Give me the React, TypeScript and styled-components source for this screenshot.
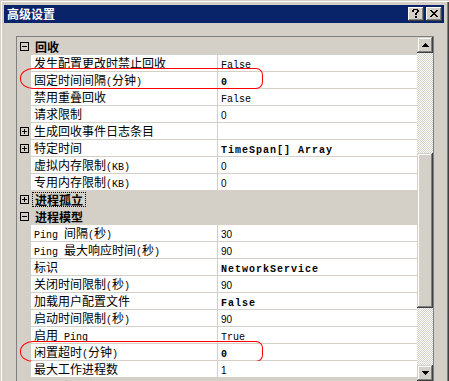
import React from 'react';
import styled, { createGlobalStyle } from 'styled-components';

const FACE = '#D4D0C8';
const CJK = `"Noto Sans CJK SC", "Noto Sans", sans-serif`;
const MONO = `"Liberation Mono", "Noto Sans CJK SC", monospace`;

const GlobalStyle = createGlobalStyle`
  html, body { margin: 0; padding: 0; width: 449px; height: 381px; overflow: hidden; background: ${FACE}; }
  #root { width: 449px; height: 381px; overflow: hidden; }
`;

const Window = styled.div`
  box-sizing: border-box;
  width: 449px;
  height: 400px;
  padding: 5px 5px 0 4px;
  display: flex;
  flex-direction: column;
  background: ${FACE};
  box-shadow: inset 1px 1px ${FACE}, inset 2px 2px #fff, inset -1px -1px #404040, inset -2px -2px #808080;
`;

const TitleBar = styled.div`
  height: 18px;
  flex: none;
  background: #0a246a;
  display: flex;
  align-items: center;
  padding: 0 2px 0 2px;
`;

const Title = styled.span`
  color: #fff;
  font: bold 12px/18px ${CJK};
  padding-left: 1px;
`;

const CaptionButtons = styled.div`
  margin-left: auto;
  display: flex;
  gap: 2px;
`;

const CaptionButton = styled.div`
  width: 16px;
  height: 14px;
  box-sizing: border-box;
  background: ${FACE};
  box-shadow: inset -1px -1px #404040, inset 1px 1px #fff, inset -2px -2px #808080;
  display: flex;
  align-items: center;
  justify-content: center;
  padding-bottom: 1px;
  padding-right: 1px;
`;

const Body = styled.div`
  flex: 1;
  padding: 13px 10px 0 12px;
`;

const PropertyGrid = styled.div`
  box-sizing: border-box;
  width: 418px;
  height: 346px;
  border: 1px solid #808080;
  display: flex;
  background: ${FACE};
`;

const List = styled.div`
  box-sizing: border-box;
  width: 400px;
  height: 344px;
  padding-top: 1px;
  overflow: hidden;
  background: ${FACE};
`;

const PropRow = styled.div`
  position: relative;
  display: flex;
  height: 17px;
`;

const CategoryRow = styled.div`
  display: flex;
  height: 17px;
  background: ${FACE};
  align-items: center;
`;

const Gutter = styled.div`
  width: 14px;
  flex: none;
  display: flex;
  align-items: center;
  padding-left: 3px;
  box-sizing: border-box;
`;

const NameCell = styled.div`
  box-sizing: border-box;
  width: 187px;
  flex: none;
  background: #fff;
  border-right: 1px solid ${FACE};
  border-bottom: 1px solid ${FACE};
  padding-left: 3px;
  font: 12px/16px ${CJK};
  color: #000;
  white-space: nowrap;
  overflow: hidden;
`;

const ValueCell = styled.div`
  box-sizing: border-box;
  flex: 1;
  background: #fff;
  border-bottom: 1px solid ${FACE};
  padding-left: 3px;
  line-height: 16px;
  white-space: nowrap;
  overflow: hidden;
`;

const Latin = styled.span`
  font-family: "Liberation Mono", monospace;
  font-size: 10px;
`;

const Value = styled.span<{ $kind: 'num' | 'text' | 'bold' }>`
  color: #000;
  font-family: ${(p) => (p.$kind === 'num' ? '"Liberation Sans", sans-serif' : '"Liberation Mono", monospace')};
  font-size: 10px;
  font-weight: ${(p) => (p.$kind === 'bold' ? 'bold' : 'normal')};
  letter-spacing: ${(p) => (p.$kind === 'bold' ? '1px' : '0')};
`;

const CategoryLabel = styled.span<{ $focused?: boolean }>`
  margin-left: 1px;
  padding: 0 2px;
  border: 1px dotted ${(p) => (p.$focused ? '#000' : 'transparent')};
  font: bold 12px/13px ${CJK};
  color: #000;
  white-space: nowrap;
`;

const RedMark = styled.div<{ $top: number }>`
  position: absolute;
  left: 3px;
  top: ${(p) => p.$top}px;
  width: 243px;
  height: 21px;
  box-sizing: border-box;
  border: 1px solid #ff0000;
  border-radius: 13px 7px 7px 13px / 10px 7px 7px 10px;
  pointer-events: none;
`;

const Scrollbar = styled.div`
  width: 16px;
  height: 344px;
  flex: none;
  display: flex;
  flex-direction: column;
`;

const Raised = styled.div<{ $h: number }>`
  box-sizing: border-box;
  width: 16px;
  height: ${(p) => p.$h}px;
  flex: none;
  background: ${FACE};
  box-shadow: inset -1px -1px #404040, inset 1px 1px ${FACE}, inset -2px -2px #808080, inset 2px 2px #fff;
  display: flex;
  align-items: center;
  justify-content: center;
`;

const Track = styled.div<{ $h?: number }>`
  flex: ${(p) => (p.$h ? 'none' : '1')};
  height: ${(p) => (p.$h ? `${p.$h}px` : 'auto')};
  background-color: ${FACE};
  background-image: repeating-conic-gradient(#fff 0 25%, ${FACE} 0 50%);
  background-size: 2px 2px;
`;

const Arrow = ({ down }: { down?: boolean }) => (
  <svg width="7" height="4" viewBox="0 0 7 4" shapeRendering="crispEdges" style={{ transform: down ? 'scaleY(-1)' : undefined }}>
    <rect x="3" y="0" width="1" height="1" fill="#000" />
    <rect x="2" y="1" width="3" height="1" fill="#000" />
    <rect x="1" y="2" width="5" height="1" fill="#000" />
    <rect x="0" y="3" width="7" height="1" fill="#000" />
  </svg>
);

const Expander = ({ open }: { open: boolean }) => (
  <svg width="9" height="9" viewBox="0 0 9 9" shapeRendering="crispEdges">
    <rect x="0.5" y="0.5" width="8" height="8" fill="none" stroke="#000" />
    <rect x="2" y="4" width="5" height="1" fill="#000" />
    {!open && <rect x="4" y="2" width="1" height="5" fill="#000" />}
  </svg>
);

const QuestionGlyph = () => (
  <svg width="8" height="9" viewBox="0 0 8 9" shapeRendering="crispEdges">
    <rect x="1" y="0" width="5" height="1" fill="#000" />
    <rect x="0" y="1" width="2" height="2" fill="#000" />
    <rect x="5" y="1" width="2" height="2" fill="#000" />
    <rect x="4" y="3" width="2" height="1" fill="#000" />
    <rect x="3" y="4" width="2" height="2" fill="#000" />
    <rect x="3" y="7" width="2" height="2" fill="#000" />
  </svg>
);

const CloseGlyph = () => (
  <svg width="8" height="7" viewBox="0 0 8 7" shapeRendering="crispEdges">
    <rect x="0" y="0" width="2" height="1" fill="#000" />
    <rect x="6" y="0" width="2" height="1" fill="#000" />
    <rect x="1" y="1" width="2" height="1" fill="#000" />
    <rect x="5" y="1" width="2" height="1" fill="#000" />
    <rect x="2" y="2" width="4" height="1" fill="#000" />
    <rect x="3" y="3" width="2" height="1" fill="#000" />
    <rect x="2" y="4" width="4" height="1" fill="#000" />
    <rect x="1" y="5" width="2" height="1" fill="#000" />
    <rect x="5" y="5" width="2" height="1" fill="#000" />
    <rect x="0" y="6" width="2" height="1" fill="#000" />
    <rect x="6" y="6" width="2" height="1" fill="#000" />
  </svg>
);

type Row =
  | { type: 'cat'; label: string; open: boolean; focused?: boolean }
  | { type: 'prop'; name: string; value: string; bold?: boolean; expander?: boolean; mark?: number };

const rows: Row[] = [
  { type: 'cat', label: '回收', open: true },
  { type: 'prop', name: '发生配置更改时禁止回收', value: 'False' },
  { type: 'prop', name: '固定时间间隔(分钟)', value: '0', bold: true, mark: -4 },
  { type: 'prop', name: '禁用重叠回收', value: 'False' },
  { type: 'prop', name: '请求限制', value: '0' },
  { type: 'prop', name: '生成回收事件日志条目', value: '', expander: true },
  { type: 'prop', name: '特定时间', value: 'TimeSpan[] Array', bold: true, expander: true },
  { type: 'prop', name: '虚拟内存限制(KB)', value: '0' },
  { type: 'prop', name: '专用内存限制(KB)', value: '0' },
  { type: 'cat', label: '进程孤立', open: false, focused: true },
  { type: 'cat', label: '进程模型', open: true },
  { type: 'prop', name: 'Ping 间隔(秒)', value: '30' },
  { type: 'prop', name: 'Ping 最大响应时间(秒)', value: '90' },
  { type: 'prop', name: '标识', value: 'NetworkService', bold: true },
  { type: 'prop', name: '关闭时间限制(秒)', value: '90' },
  { type: 'prop', name: '加载用户配置文件', value: 'False', bold: true },
  { type: 'prop', name: '启动时间限制(秒)', value: '90' },
  { type: 'prop', name: '启用 Ping', value: 'True' },
  { type: 'prop', name: '闲置超时(分钟)', value: '0', bold: true, mark: -3 },
  { type: 'prop', name: '最大工作进程数', value: '1' },
  { type: 'cat', label: '快速故障防护', open: true },
];

const Mixed = ({ text }: { text: string }) => {
  const parts = text.split(/([\u0000-\u00ff]+)/).filter(Boolean);
  return (
    <>
      {parts.map((p, i) => (/^[\u0000-\u00ff]+$/.test(p) ? <Latin key={i}>{p}</Latin> : <React.Fragment key={i}>{p}</React.Fragment>))}
    </>
  );
};

export default function App() {
  return (
    <>
      <GlobalStyle />
      <Window>
        <TitleBar>
          <Title>高级设置</Title>
          <CaptionButtons>
            <CaptionButton>
              <QuestionGlyph />
            </CaptionButton>
            <CaptionButton>
              <CloseGlyph />
            </CaptionButton>
          </CaptionButtons>
        </TitleBar>
        <Body>
          <PropertyGrid>
            <List>
              {rows.map((r, i) =>
                r.type === 'cat' ? (
                  <CategoryRow key={i}>
                    <Gutter>
                      <Expander open={r.open} />
                    </Gutter>
                    <CategoryLabel $focused={r.focused}>{r.label}</CategoryLabel>
                  </CategoryRow>
                ) : (
                  <PropRow key={i}>
                    <Gutter>{r.expander && <Expander open={false} />}</Gutter>
                    <NameCell>
                      <Mixed text={r.name} />
                    </NameCell>
                    <ValueCell>
                      {r.value && (
                        <Value $kind={r.bold ? 'bold' : /^\d+$/.test(r.value) ? 'num' : 'text'}>{r.value}</Value>
                      )}
                    </ValueCell>
                    {r.mark !== undefined && <RedMark $top={r.mark} />}
                  </PropRow>
                )
              )}
            </List>
            <Scrollbar>
              <Raised $h={16}>
                <Arrow />
              </Raised>
              <Track $h={100} />
              <Raised $h={155} />
              <Track />
              <Raised $h={16}>
                <Arrow down />
              </Raised>
            </Scrollbar>
          </PropertyGrid>
        </Body>
      </Window>
    </>
  );
}
